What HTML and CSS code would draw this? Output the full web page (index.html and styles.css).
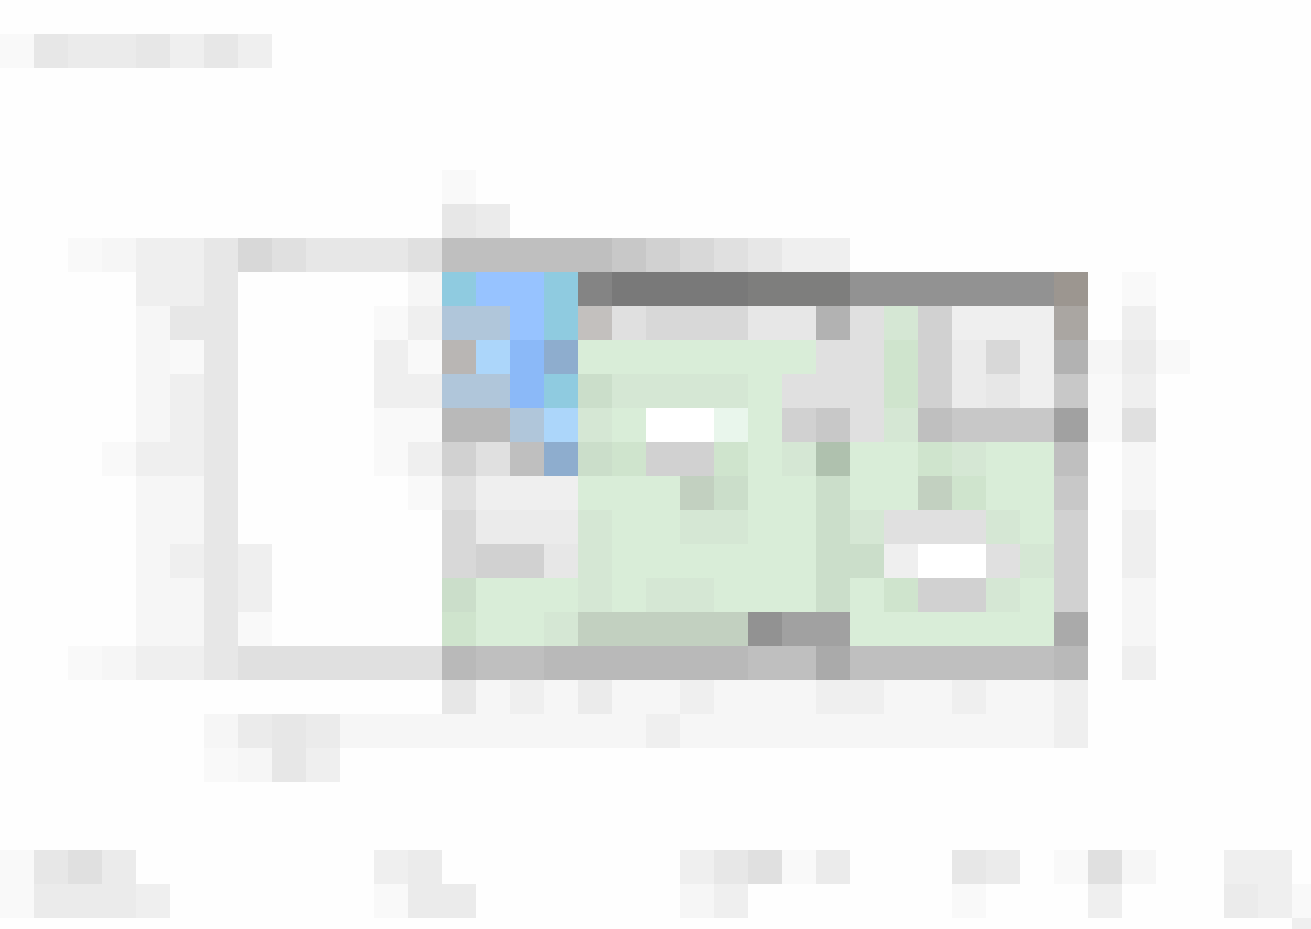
FILE: index.html
```
<!DOCTYPE html>
<html lang="en">
<head>
    <meta charset="UTF-8">
    <meta name="viewport" content="width=device-width, initial-scale=1.0">
    <title>Floor Plan</title>
    <link rel="stylesheet" href="styles.css">
</head>
<body>
    <main class="container">
        <svg id="plan" class="plan" viewBox="0 0 1311 929" role="img" aria-label="Floor plan"></svg>
    </main>
    <script src="script.js"></script>
</body>
</html>
```

FILE: styles.css
```
body {
    margin: 0;
    background-color: #fefefe;
}
.container {
    width: 100%;
}
.plan {
    display: block;
    width: 100%;
    height: auto;
    shape-rendering: crispEdges;
}
```

FILE: script.js
```
const CELL = 34;

const colors = {
    // grays, light to dark
    '.': '#ffffff',
    a: '#f9f9f9',
    b: '#f6f6f6',
    c: '#efefef',
    d: '#ebebeb',
    e: '#e7e7e7',
    f: '#e0e0e0',
    g: '#d8d8d8',
    h: '#d1d1d1',
    i: '#c8c8c8',
    j: '#bfbfbf',
    q: '#b9b9b9',
    k: '#b2b2b2',
    r: '#aaaaaa',
    l: '#a1a1a1',
    m: '#929292',
    n: '#848484',
    p: '#7e7e7d',
    o: '#797979',
    // blues
    P: '#8fcbe0',
    Q: '#97c3ff',
    R: '#8bb9f8',
    S: '#b0c6da',
    T: '#acd6fa',
    U: '#8eadce',
    // greens
    A: '#d9edd8',
    B: '#d5e7d4',
    H: '#cfe4cd',
    C: '#cbdeca',
    D: '#c2d0c0',
    E: '#afc1ae',
    F: '#e9f6ec',
    // warm grays
    W: '#9c9690',
    X: '#aaa6a2',
    Y: '#c3c0be',
    Z: '#b9b6b4'
};

// [row, first column, one letter per cell]
const cells = [
    [1, 0, 'aeddecec'],
    [5, 13, 'a'],
    [6, 13, 'ed'],
    [7, 2, 'abccegfeeefjjjjjihgfecc'],
    [8, 4, 'cce'],
    [8, 12, 'bPQQPnoooopppmmmmmmW'],
    [8, 33, 'a'],
    [9, 4, 'bee'],
    [9, 11, 'acSSQPYfgggeekfBhcccX'],
    [9, 33, 'c'],
    [10, 4, 'bae'],
    [10, 11, 'caZTRUAAAAAAAffHhdgckbda'],
    [11, 4, 'bce'],
    [11, 11, 'ccSSRPCBBBBAfffHhdeciac'],
    [12, 4, 'bce'],
    [12, 11, 'aaqqSTBA..FAhifBjiiilaf'],
    [13, 3, 'acce'],
    [13, 11, 'achfjUCHhhHABEAAHBAAj'],
    [13, 33, 'b'],
    [14, 4, 'bbe'],
    [14, 12, 'afcccAAADCAACAADHAAi'],
    [14, 33, 'b'],
    [15, 4, 'bbe'],
    [15, 13, 'gdddBAABBAACBfffBAh'],
    [15, 33, 'c'],
    [16, 4, 'bcec'],
    [16, 13, 'ghheBAAAAAACCc..fBh'],
    [16, 33, 'c'],
    [17, 4, 'bbec'],
    [17, 13, 'CAAABABBAAACAHhhBAh'],
    [17, 33, 'b'],
    [18, 4, 'bbea'],
    [18, 13, 'HAABDDDDDmllAAAAAAr'],
    [18, 33, 'b'],
    [19, 2, 'abcceffffffqjjqqqqqqjjrjjjjjjq'],
    [19, 33, 'c'],
    [20, 13, 'ebcbdbbcbbbccbbcbbc'],
    [21, 6, 'bdedbbbbbbbbbcbbbbbbbbbbbc'],
    [22, 6, 'abec'],
    [25, 0, 'aefd'],
    [25, 11, 'cd'],
    [25, 20, 'cefad'],
    [25, 28, 'ed'],
    [25, 31, 'afb'],
    [25, 36, 'cc'],
    [26, 0, 'adddc'],
    [26, 11, 'add'],
    [26, 20, 'bc'],
    [26, 28, 'a'],
    [26, 32, 'c'],
    [26, 36, 'dca'],
    [27, 38, 'c']
];

const plan = document.getElementById('plan');

cells.forEach(([row, column, letters]) => {
    [...letters].forEach((letter, i) => {
        const rect = document.createElementNS('http://www.w3.org/2000/svg', 'rect');
        rect.setAttribute('x', (column + i) * CELL);
        rect.setAttribute('y', row * CELL);
        rect.setAttribute('width', CELL);
        rect.setAttribute('height', CELL);
        rect.setAttribute('fill', colors[letter]);
        plan.appendChild(rect);
    });
});
```
